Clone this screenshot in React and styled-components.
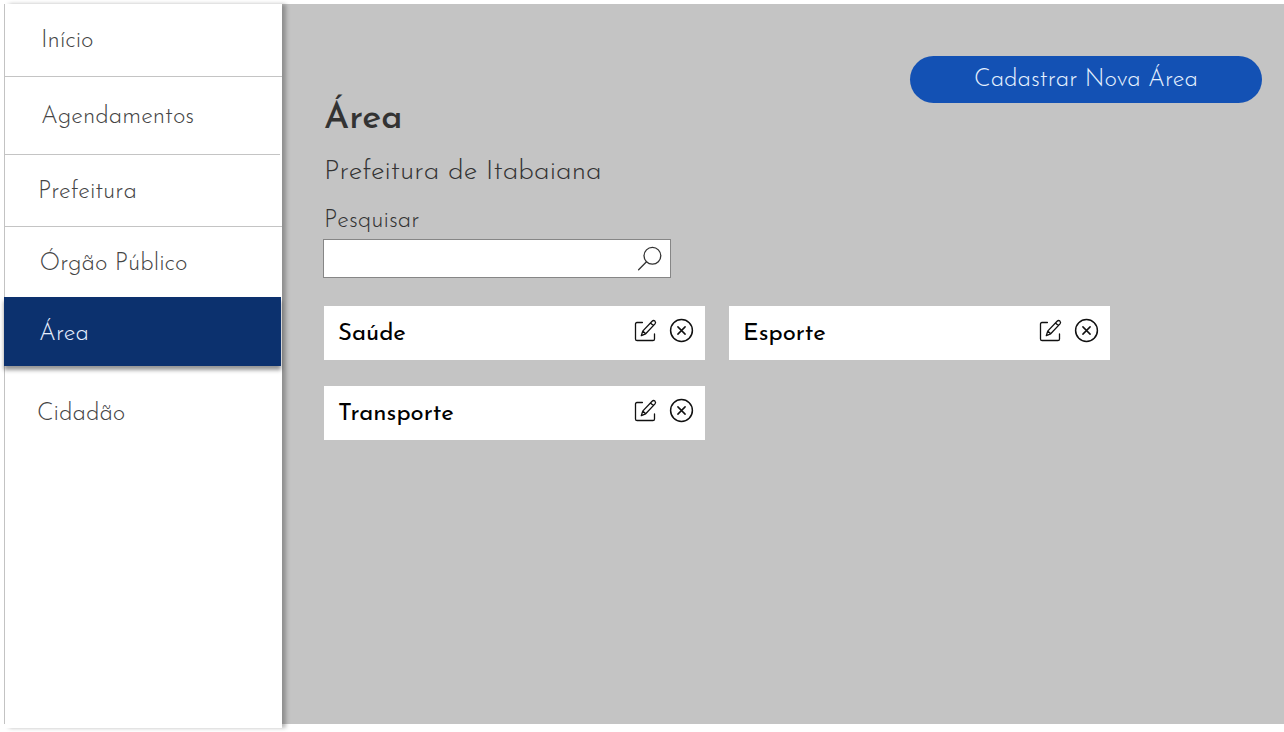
import React from "react";
import styled, { createGlobalStyle } from "styled-components";

const GlobalStyle = createGlobalStyle`
  *, *::before, *::after { box-sizing: border-box; }
  html, body { margin: 0; background: #ffffff; }
  body { font-family: "Josefin Sans", Lato, "Open Sans", sans-serif; overflow: hidden; }
`;

const Page = styled.div`
  width: 1284px;
  height: 732px;
  padding: 4px 0 0 4px;
`;

const Stage = styled.div`
  display: flex;
  align-items: flex-start;
  width: 1280px;
  height: 720px;
  padding-left: 1px;
  background: #c4c4c4;
`;

const Sidebar = styled.nav`
  display: flex;
  flex-direction: column;
  flex: none;
  width: 277px;
  height: 724px;
  background: #ffffff;
  box-shadow: 4px 0 4px rgba(0, 0, 0, 0.27);
`;

const NavItem = styled.a`
  flex: none;
  width: ${(p) => p.$width || 277}px;
  height: ${(p) => p.$height}px;
  padding: ${(p) => p.$top}px 0 0 ${(p) => p.$left}px;
  border-bottom: ${(p) => (p.$line ? "1px solid #c4c4c4" : "0")};
  color: #444444;
`;

const ActiveItem = styled(NavItem)`
  margin-left: -1px;
  background: #0c316e;
  color: #e6efff;
  box-shadow: 0 4px 4px rgba(0, 0, 0, 0.42);
`;

const Text = styled.span`
  display: block;
  font-size: ${(p) => p.$size || 24}px;
  line-height: ${(p) => p.$line || 29}px;
  font-weight: ${(p) => p.$weight || 300};
  white-space: nowrap;
`;

const Main = styled.main`
  display: flex;
  flex-direction: column;
  flex: 1;
  padding: 52px 22px 0 41px;
  color: #333333;
`;

const RegisterButton = styled.button`
  align-self: flex-end;
  display: flex;
  justify-content: center;
  width: 352px;
  height: 47px;
  padding: 10px 0 0;
  border: 0;
  border-radius: 24px;
  background: #1351b4;
  color: #e6f1ff;
  font-family: inherit;
`;

const Heading = styled.header`
  height: 131px;
  margin-top: -3px;
  padding-left: 1px;
`;

const Title = styled.h1`
  margin: 0;
  height: 55px;
`;

const Subtitle = styled.p`
  margin: 0;
  height: 52px;
`;

const SearchBox = styled.label`
  display: flex;
  justify-content: space-between;
  align-items: center;
  width: 348px;
  height: 39px;
  margin-top: 8px;
  padding-right: 7px;
  border: 1px solid #868686;
  background: #ffffff;
`;

const SearchInput = styled.input`
  flex: 1;
  height: 100%;
  min-width: 0;
  border: 0;
  outline: 0;
  background: transparent;
  font: inherit;
`;

const CardGrid = styled.section`
  display: grid;
  grid-template-columns: 381px 381px;
  gap: 26px 24px;
  margin: 28px 0 0 1px;
`;

const Card = styled.article`
  display: flex;
  justify-content: space-between;
  height: 54px;
  padding: 12px 11px 0 14px;
  background: #ffffff;
  color: #000000;
`;

const CardName = styled(Text)`
  padding-top: 2px;
  font-weight: 400;
`;

const Actions = styled.div`
  display: flex;
  gap: 11px;
`;

const Icon = styled.svg`
  display: block;
  flex: none;
  fill: none;
  stroke: ${(p) => p.$color || "#111111"};
  stroke-width: ${(p) => p.$stroke || 1.3};
  stroke-linecap: round;
  stroke-linejoin: round;
`;

const SearchIcon = () => (
  <Icon width="26" height="26" viewBox="0 0 26 26" $color="#333333">
    <circle cx="15.4" cy="9.8" r="8.4" />
    <path d="M9.5 15.8 1.6 23.8" />
  </Icon>
);

const EditIcon = () => (
  <Icon width="24" height="24" viewBox="0 0 24 24">
    <path d="M8.4 4.5H3Q1.5 4.5 1.5 6V20.9Q1.5 22.5 3.1 22.5H18.9Q20.5 22.5 20.5 20.9V16" />
    <path d="M7.3 17.7 8.7 13.1 18.1 3.2Q19.5 1.9 20.9 3.1 22.2 4.5 21 5.9L11.7 15.8ZM8.7 13.1 11.7 15.8M16.4 5 19.4 7.6" />
  </Icon>
);

const CloseIcon = () => (
  <Icon width="25" height="25" viewBox="0 0 25 25" $stroke="1.5">
    <circle cx="12.5" cy="12.5" r="10.9" />
    <path d="m8.9 8.9 7.2 7.2M16.1 8.9l-7.2 7.2" />
  </Icon>
);

const AreaCard = ({ name }) => (
  <Card>
    <CardName>{name}</CardName>
    <Actions>
      <EditIcon />
      <CloseIcon />
    </Actions>
  </Card>
);

export default function App() {
  return (
    <Page>
      <GlobalStyle />
      <Stage>
        <Sidebar>
          <NavItem $height={73} $top={23} $left={36} $line><Text>Início</Text></NavItem>
          <NavItem $height={78} $top={26} $left={36} $line $width={275}><Text>Agendamentos</Text></NavItem>
          <NavItem $height={72} $top={23} $left={33} $line><Text>Prefeitura</Text></NavItem>
          <NavItem $height={70} $top={23} $left={34.5}><Text>Órgão Público</Text></NavItem>
          <ActiveItem $height={69} $top={23} $left={35}><Text>Área</Text></ActiveItem>
          <NavItem $height={80} $top={34} $left={32}><Text>Cidadão</Text></NavItem>
        </Sidebar>
        <Main>
          <RegisterButton><Text>Cadastrar Nova Área</Text></RegisterButton>
          <Heading>
            <Title><Text $size={36} $line={38} $weight={500}>Área</Text></Title>
            <Subtitle><Text $size={28} $line={34}>Prefeitura de Itabaiana</Text></Subtitle>
            <Text>Pesquisar</Text>
          </Heading>
          <SearchBox>
            <SearchInput aria-label="Pesquisar" />
            <SearchIcon />
          </SearchBox>
          <CardGrid>
            <AreaCard name="Saúde" />
            <AreaCard name="Esporte" />
            <AreaCard name="Transporte" />
          </CardGrid>
        </Main>
      </Stage>
    </Page>
  );
}
